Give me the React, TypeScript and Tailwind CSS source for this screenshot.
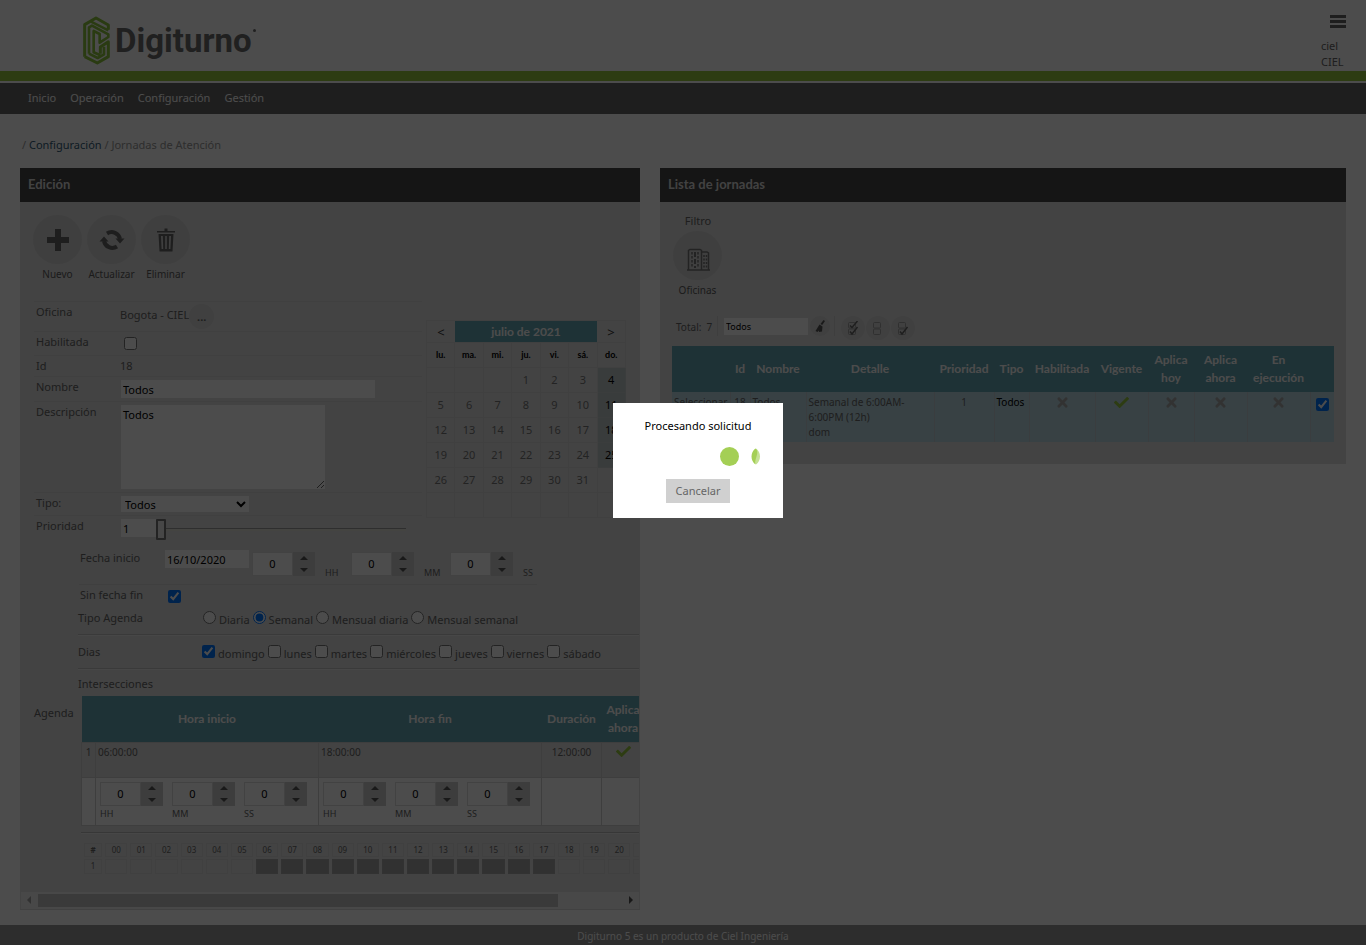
import React from "react";
import { FaCheck, FaTimes } from "react-icons/fa";

const inputBase = "border-0 bg-white text-black outline-none";

function Logo() {
  return (
    <div className="flex items-center gap-[5px]">
      <svg width="27" height="49" viewBox="0 0 81 147" fill="none" stroke="#8cc63f" strokeWidth="9" strokeLinejoin="round">
        <path d="M5 122V26L39 6l37 21v14" />
        <path d="M5 122l38 19 33-19V77L52 93v20" />
        <path d="M18 113V34l9-5 49 26v8L50 80V54L32 45v64l20 9" strokeWidth="8" />
        <path d="M18 113l26 13 19-11V92" strokeWidth="8" />
        <path d="M24 17 76 43" strokeWidth="7" />
      </svg>
      <div className="relative font-['Roboto',sans-serif] text-[33px] leading-[48px] font-bold text-[#6d6d6d]">
        Digiturno
        <span className="absolute top-3 -right-1 size-[3px] rounded-full bg-[#6d6d6d]" />
      </div>
    </div>
  );
}

function ToolButton({ label, children }: { label: string; children: React.ReactNode }) {
  return (
    <button type="button" className="flex w-[49px] flex-col items-center text-[10px] leading-4 text-[#5c5c5c]">
      <span className="flex size-[49px] items-center justify-center rounded-full bg-[#d3d3d3] text-[#666]">{children}</span>
      <span className="mt-[2px] whitespace-nowrap">{label}</span>
    </button>
  );
}

function PlusIcon() {
  return (
    <svg width="22" height="22" viewBox="0 0 22 22" fill="currentColor">
      <path d="M8 0h6v8h8v6h-8v8H8v-8H0V8h8z" />
    </svg>
  );
}

function RefreshIcon() {
  return (
    <svg width="26" height="24" viewBox="0 0 26 24" fill="none" stroke="currentColor" strokeWidth="4">
      <path d="M8 5.5A8.5 8.5 0 0 1 21 11" />
      <path d="M18 18.5A8.5 8.5 0 0 1 5 13" />
      <path d="M16.500 10.500h9L21 15.500zM.5 13.500h9L5 8.500z" fill="currentColor" stroke="none" />
    </svg>
  );
}

function TrashIcon() {
  return (
    <svg width="20" height="24" viewBox="0 0 20 24" fill="currentColor">
      <path d="M8.500.5h3V3H19v1.500H1V3h7.500z" />
      <path d="M2.500 6h15l-1 17.500h-13zM5 8l.6 13h1.600L6.800 8zm4.200 0v13h1.600V8zm4 0-.4 13h1.600L15 8z" fillRule="evenodd" />
    </svg>
  );
}

function BuildingIcon() {
  return (
    <svg width="24" height="23" viewBox="0 0 24 23" fill="none" stroke="#777">
      <path d="M1 22h23M2.500 22V2.500L4 1.500h10l1.500 1V22M15.500 4H21l1.500 1v17" strokeWidth="1.500" />
      <path d="M6 4v16M12 4v16" strokeWidth="1.500" strokeDasharray="2.500 1.500" />
      <path d="M9 4v16" strokeWidth="2" strokeDasharray="5 2" />
      <path d="M18 7v13M20.500 7v13" strokeWidth="1.500" strokeDasharray="2 1.500" />
    </svg>
  );
}

function BrushIcon() {
  return (
    <svg width="10" height="12" viewBox="0 0 10 12" fill="#555">
      <path d="M8.500 0 10 1 7.200 5 5.500 4z" />
      <path d="M4.500 4.500 7.500 6.500 7 11.500 4 12l-.3-1.500L2.500 12 .5 11z" />
    </svg>
  );
}

function ChecksIcon({ top, bottom }: { top?: boolean; bottom?: boolean }) {
  return (
    <svg width="12" height="15" viewBox="0 0 12 15" fill="none" stroke="#a0a0a0">
      <rect x="1.500" y="1.500" width="7" height="5.500" rx="1" />
      <rect x="1.500" y="8" width="7" height="5.500" rx="1" />
      {top && <path d="M3 4.500 5 6.500 10.500 0" stroke="#666" strokeWidth="1.500" />}
      {bottom && <path d="M3 10.500 5 13 10.500 6" stroke="#666" strokeWidth="1.500" />}
    </svg>
  );
}

function Triangle({ up }: { up?: boolean }) {
  return (
    <svg width="8" height="4" viewBox="0 0 8 4" fill="#555">
      {up ? <path d="M4 0 8 4H0z" /> : <path d="M0 0h8L4 4z" />}
    </svg>
  );
}

function Spinner({ label }: { label: string }) {
  return (
    <div className="flex h-6 w-[63px] shrink-0">
      <input aria-label={label} defaultValue="0" className="w-[41px] border border-[#dedede] bg-white text-center text-[11px] text-black" />
      <div className="flex w-[22px] flex-col bg-[#cdcdcd]">
        <button type="button" aria-label={label + ": aumentar"} className="flex h-3 items-center justify-center"><Triangle up /></button>
        <button type="button" aria-label={label + ": disminuir"} className="flex h-3 items-center justify-center"><Triangle /></button>
      </div>
    </div>
  );
}

function FormRow({ label, htmlFor, height, children }: { label: string; htmlFor?: string; height: string; children: React.ReactNode }) {
  return (
    <div className={"flex border-t border-[#d6d6d6] " + height}>
      <label htmlFor={htmlFor} className="w-[86px] shrink-0 pt-[2px] pl-[2px]">{label}</label>
      {children}
    </div>
  );
}

const weeks = [
  ["", "", "", "1", "2", "3", "4"],
  ["5", "6", "7", "8", "9", "10", "11"],
  ["12", "13", "14", "15", "16", "17", "18"],
  ["19", "20", "21", "22", "23", "24", "25"],
  ["26", "27", "28", "29", "30", "31", ""],
  ["", "", "", "", "", "", ""],
];

function Calendar() {
  return (
    <table className="mt-[19px] h-[197px] w-[200px] shrink-0 table-fixed border-collapse text-center text-[#777]">
      <thead>
        <tr className="h-[22px] border border-[#d6d6d6] text-[#333]">
          <th className="text-[13px] font-normal"><button type="button">&lt;</button></th>
          <th colSpan={5} className="bg-[#67a7b4] font-['Lato',sans-serif] text-[12px] leading-4 font-bold text-white">julio de 2021</th>
          <th className="text-[13px] font-normal"><button type="button">&gt;</button></th>
        </tr>
        <tr className="h-[25px] font-['Lato',sans-serif] text-[9px] text-black">
          {["lu.", "ma.", "mi.", "ju.", "vi.", "sá.", "do."].map((d) => (
            <th key={d} className="border border-[#d6d6d6] p-0 font-bold">{d}</th>
          ))}
        </tr>
      </thead>
      <tbody>
        {weeks.map((w, i) => (
          <tr key={i} className="h-[25px]">
            {w.map((d, j) => (
              <td key={j} className={j === 6 && d ? "border border-[#c6cccc] bg-[#c0c8c8] p-0 text-black" : "border border-[#d6d6d6] p-0"}>{d}</td>
            ))}
          </tr>
        ))}
      </tbody>
    </table>
  );
}

function Rule() {
  return <div className="ml-[57px] h-[2px] border-t border-b border-t-[#c4c4c4] border-b-[#eee]" />;
}

const days = ["domingo", "lunes", "martes", "miércoles", "jueves", "viernes", "sábado"];
const kinds = ["Diaria", "Semanal", "Mensual diaria", "Mensual semanal"];
const hours = Array.from({ length: 24 }, (_, i) => String(i).padStart(2, "0"));

function TimeCell({ name }: { name: string }) {
  return (
    <td className="border border-[#d0d0d0] p-0 pt-1 pl-1 align-top">
      <div className="flex gap-[9px]">
        {["HH", "MM", "SS"].map((u) => (
          <div key={u}>
            <Spinner label={name + " " + u} />
            <div className="text-[9px] leading-4">{u}</div>
          </div>
        ))}
      </div>
    </td>
  );
}

function EditPanel() {
  return (
    <section className="min-w-0 bg-[#e0e0e0]">
      <h2 className="h-[34px] bg-[#464646] pl-2 font-['Lato',sans-serif] text-[13px] leading-[33px] font-bold text-[#ddd]">Edición</h2>
      <div className="overflow-hidden border-x border-[#e0e0e0]">
        <div className="w-[700px] pb-4">
          <div className="flex gap-[5px] pt-[13px] pl-3">
            <ToolButton label="Nuevo"><PlusIcon /></ToolButton>
            <ToolButton label="Actualizar"><RefreshIcon /></ToolButton>
            <ToolButton label="Eliminar"><TrashIcon /></ToolButton>
          </div>

          <div className="mt-[19px] flex items-start gap-1 pl-[13px]">
            <div className="w-[388px]">
              <FormRow label="Oficina" height="h-[30px]">
                <span className="pt-[5px]">Bogota - CIEL</span>
                <button type="button" aria-label="Elegir oficina" className="mt-[2px] size-[25px] rounded-full bg-[#d6d6d6] font-bold">...</button>
              </FormRow>
              <FormRow label="Habilitada" htmlFor="enabled" height="h-[24px]">
                <input id="enabled" type="checkbox" className="mt-[5px] ml-1 size-[13px]" />
              </FormRow>
              <FormRow label="Id" height="h-[21px]"><span className="pt-[2px]">18</span></FormRow>
              <FormRow label="Nombre" htmlFor="name" height="h-[25px]">
                <input id="name" defaultValue="Todos" className={inputBase + " mt-[3px] ml-px h-[18px] w-[254px] pl-[2px]"} />
              </FormRow>
              <FormRow label="Descripción" htmlFor="desc" height="h-[91px]">
                <textarea id="desc" defaultValue="Todos" className={inputBase + " mt-[3px] ml-px h-[84px] w-[204px] pt-[2px] pl-[2px]"} />
              </FormRow>
              <FormRow label="Tipo:" htmlFor="kind" height="h-[23px]">
                <select id="kind" className={inputBase + " mt-[3px] ml-px h-4 w-[128px]"}><option>Todos</option></select>
              </FormRow>
              <FormRow label="Prioridad" htmlFor="priority" height="h-[32px]">
                <input id="priority" defaultValue="1" className={inputBase + " mt-[3px] ml-px h-[18px] w-[35px] pl-[2px]"} />
                <input
                  type="range" aria-label="Prioridad" min={1} max={100} defaultValue={1}
                  className="mt-[2px] h-[22px] w-[250px] appearance-none bg-transparent [&::-webkit-slider-runnable-track]:h-[3px] [&::-webkit-slider-runnable-track]:border-t [&::-webkit-slider-runnable-track]:border-[#999] [&::-webkit-slider-runnable-track]:bg-[#e4e4da] [&::-webkit-slider-thumb]:-mt-[10px] [&::-webkit-slider-thumb]:h-[21px] [&::-webkit-slider-thumb]:w-[10px] [&::-webkit-slider-thumb]:appearance-none [&::-webkit-slider-thumb]:rounded-[1px] [&::-webkit-slider-thumb]:border-2 [&::-webkit-slider-thumb]:border-[#777] [&::-webkit-slider-thumb]:bg-[#eee]"
                />
              </FormRow>
            </div>
            <Calendar />
          </div>

          <div className="ml-[58px] flex h-[38px] w-[458px] items-start border-b border-[#d4d4d4]">
            <label htmlFor="start" className="w-[86px] shrink-0 pt-[3px] pl-px">Fecha inicio</label>
            <input id="start" defaultValue="16/10/2020" className={inputBase + " mt-[3px] mr-[3px] h-[18px] w-[84px] shrink-0 pl-[2px]"} />
            {["HH", "MM", "SS"].map((u) => (
              <div key={u} className="mt-[5px] flex w-[99px] shrink-0 items-end gap-[10px]">
                <Spinner label={"Fecha inicio " + u} />
                <span className="text-[9px] leading-[6px]">{u}</span>
              </div>
            ))}
          </div>
          <div className="flex h-[21px] pl-[59px]">
            <label htmlFor="noend" className="w-[88px] pt-[2px]">Sin fecha fin</label>
            <input id="noend" type="checkbox" defaultChecked className="mt-[5px] size-[13px]" />
          </div>
          <div className="flex h-7 pl-[57px]">
            <span className="w-[125px] pt-1">Tipo Agenda</span>
            <div className="flex gap-[3px] pt-[5px]">
              {kinds.map((k) => (
                <label key={k} className="flex gap-[3px]">
                  <input type="radio" name="schedule" defaultChecked={k === "Semanal"} className="size-[13px]" />
                  <span className="pt-px">{k}</span>
                </label>
              ))}
            </div>
          </div>
          <Rule />
          <div className="flex h-8 pl-[57px]">
            <span className="w-[124px] pt-2">Dias</span>
            <div className="flex gap-[3px] pt-[9px]">
              {days.map((d) => (
                <label key={d} className="flex gap-[3px]">
                  <input type="checkbox" defaultChecked={d === "domingo"} className="size-[13px]" />
                  <span className="pt-px">{d}</span>
                </label>
              ))}
            </div>
          </div>
          <Rule />
          <div className="h-[26px] pt-[6px] pl-[57px]">Intersecciones</div>

          <div className="flex">
            <div className="w-[60px] shrink-0 pt-[9px] pl-[13px]">Agenda</div>
            <div className="w-[640px]">
              <table className="w-full table-fixed border-collapse text-[10px]">
                <colgroup>
                  <col className="w-[14px]" /><col className="w-[223px]" /><col className="w-[223px]" />
                  <col className="w-[60px]" /><col className="w-[43px]" /><col />
                </colgroup>
                <thead>
                  <tr className="h-[46px] bg-[#67a7b4] font-['Lato',sans-serif] text-[12px] leading-[18px] text-white">
                    <th></th><th>Hora inicio</th><th>Hora fin</th><th>Duración</th><th>Aplica ahora</th><th></th>
                  </tr>
                </thead>
                <tbody>
                  <tr className="h-[35px] align-top leading-4">
                    <td className="border border-[#d0d0d0] p-0 pt-px text-center">1</td>
                    <td className="border border-[#d0d0d0] p-0 pt-px pl-[2px]">06:00:00</td>
                    <td className="border border-[#d0d0d0] p-0 pt-px pl-[2px]">18:00:00</td>
                    <td className="border border-[#d0d0d0] p-0 pt-px text-center">12:00:00</td>
                    <td className="border border-[#d0d0d0] p-0 pt-px"><FaCheck size={15} color="#96c83c" className="mx-auto" /></td>
                    <td className="border border-[#d0d0d0] p-0"></td>
                  </tr>
                  <tr className="h-[48px] bg-white">
                    <td className="border border-[#d0d0d0] p-0"></td>
                    <TimeCell name="Hora inicio" />
                    <TimeCell name="Hora fin" />
                    <td className="border border-[#d0d0d0] p-0"></td>
                    <td className="border border-[#d0d0d0] p-0"></td>
                    <td className="border border-[#d0d0d0] p-0"></td>
                  </tr>
                </tbody>
              </table>
              <div className="mt-[6px] h-[2px] border-t border-b border-t-[#b8b8b8] border-b-[#eee]" />
              <table className="mt-[7px] w-[628px] table-fixed border-separate border-spacing-x-[3px] border-spacing-y-[2px] text-center text-[8px]">
                <colgroup>
                  <col className="w-[18px]" />
                  {hours.map((h) => <col key={h} className="w-[22px]" />)}
                </colgroup>
                <thead>
                  <tr className="h-[14px]">
                    <th className="border border-[#d6d6d6] p-0 leading-3">#</th>
                    {hours.map((h) => <th key={h} className="border border-[#d6d6d6] p-0 leading-3 font-normal">{h}</th>)}
                  </tr>
                </thead>
                <tbody>
                  <tr className="h-[15px]">
                    <td className="border border-[#d6d6d6] p-0 leading-3">1</td>
                    {hours.map((h, i) => (
                      <td key={h} className={i >= 6 && i < 18 ? "border border-[#a8a8a8] bg-[#a3a3a3] p-0" : "border border-[#d6d6d6] p-0"}></td>
                    ))}
                  </tr>
                </tbody>
              </table>
            </div>
          </div>
        </div>
        <div className="flex h-[17px] items-center bg-[#f1f1f1]">
          <svg width="17" height="8" viewBox="0 0 17 8"><path d="M10 0v8L6 4z" fill="#a3a3a3" /></svg>
          <div className="flex-1"><div className="h-[13px] w-[89%] bg-[#c1c1c1]" /></div>
          <svg width="17" height="8" viewBox="0 0 17 8"><path d="M7 0v8l4-4z" fill="#505050" /></svg>
        </div>
      </div>
      <div className="h-px bg-[#d9d9d9]" />
    </section>
  );
}

const cell = "border-r border-[#c2cdd2] p-0 px-[2px] pt-[3px]";

function ListPanel() {
  return (
    <section className="min-w-0 bg-[#e0e0e0] pb-[22px]">
      <h2 className="h-[34px] bg-[#464646] pl-2 font-['Lato',sans-serif] text-[13px] leading-[33px] font-bold text-[#ddd]">Lista de jornadas</h2>
      <div className="px-3 pt-[11px]">
        <div className="ml-px w-[50px] text-center leading-4">Filtro</div>
        <div className="ml-px pt-[2px]"><ToolButton label="Oficinas"><span className="pt-2"><BuildingIcon /></span></ToolButton></div>
        <div className="mt-[18px] flex h-[30px] items-start pl-1 text-[10px]">
          <span className="w-[41px] pt-[3px] whitespace-nowrap">Total:&nbsp; 7</span>
          <div className="h-5 border-l border-[#cfcfcf]" />
          <input aria-label="Filtrar jornadas" defaultValue="Todos" className={inputBase + " mt-[2px] ml-[6px] h-[17px] w-[84px] pl-[2px] text-[9px]"} />
          <button type="button" aria-label="Limpiar filtro" className="ml-[2px] flex size-[20px] items-center justify-center rounded-full bg-[#d6d6d6]"><BrushIcon /></button>
          <div className="ml-1 h-5 border-l border-[#cfcfcf]" />
          <div className="ml-[6px] flex gap-px">
            <button type="button" aria-label="Marcar todas" className="flex size-6 items-center justify-center rounded-full bg-[#d6d6d6]"><ChecksIcon top bottom /></button>
            <button type="button" aria-label="Desmarcar todas" className="flex size-6 items-center justify-center rounded-full bg-[#d6d6d6]"><ChecksIcon /></button>
            <button type="button" aria-label="Invertir selección" className="flex size-6 items-center justify-center rounded-full bg-[#d6d6d6]"><ChecksIcon bottom /></button>
          </div>
        </div>
        <table className="w-full table-fixed border-collapse text-[10px]">
          <colgroup>
            <col className="w-[58px]" /><col className="w-[20px]" /><col className="w-[56px]" /><col className="w-[128px]" />
            <col className="w-[60px]" /><col className="w-[35px]" /><col className="w-[66px]" /><col className="w-[53px]" />
            <col className="w-[46px]" /><col className="w-[53px]" /><col className="w-[63px]" /><col className="w-[24px]" />
          </colgroup>
          <thead>
            <tr className="h-[46px] bg-[#67a7b4] font-['Lato',sans-serif] text-[12px] leading-[18px] text-white">
              <th className="p-0"></th><th className="p-0">Id</th><th className="p-0">Nombre</th><th className="p-0">Detalle</th>
              <th className="p-0">Prioridad</th><th className="p-0">Tipo</th><th className="p-0">Habilitada</th><th className="p-0">Vigente</th>
              <th className="p-0">Aplica hoy</th><th className="p-0">Aplica ahora</th><th className="p-0">En ejecución</th><th className="p-0"></th>
            </tr>
          </thead>
          <tbody>
            <tr className="h-[50px] bg-[#bbd9e3] align-top leading-[15px]">
              <td className={cell}><a href="#seleccionar">Seleccionar</a></td>
              <td className={cell + " text-center"}>18</td>
              <td className={cell}>Todos</td>
              <td className={cell}>Semanal de 6:00AM-<br />6:00PM (12h)<br />dom</td>
              <td className={cell + " text-center"}>1</td>
              <td className={cell + " text-black"}>Todos</td>
              <td className={cell}><FaTimes size={15} color="#a8a8a8" className="mx-auto" /></td>
              <td className={cell}><FaCheck size={15} color="#96c83c" className="mx-auto" /></td>
              <td className={cell}><FaTimes size={15} color="#a8a8a8" className="mx-auto" /></td>
              <td className={cell}><FaTimes size={15} color="#a8a8a8" className="mx-auto" /></td>
              <td className={cell}><FaTimes size={15} color="#a8a8a8" className="mx-auto" /></td>
              <td className="p-0 pt-[6px]"><input type="checkbox" aria-label="Seleccionar jornada 18" defaultChecked className="mx-auto block size-[13px]" /></td>
            </tr>
          </tbody>
        </table>
      </div>
    </section>
  );
}

function BusyDialog() {
  return (
    <div className="fixed inset-0 flex items-center justify-center bg-black/70 pb-6 pl-[30px]">
      <div role="dialog" aria-label="Procesando solicitud" className="flex h-[115px] w-[170px] flex-col items-center bg-white pt-[15px] leading-4 text-black">
        <p>Procesando solicitud</p>
        <svg className="mt-3 ml-[84px]" width="42" height="20" viewBox="0 0 42 20">
          <circle cx="10.500" cy="10.500" r="9.500" fill="#a4cf55" />
          <path d="M37 2.500a10 10 0 0 1 0 16 10 10 0 0 1 0-16z" fill="#c5e193" />
          <path d="M36.500 2.500q3 2 1 8t-1 8a10 10 0 0 1 0-16z" fill="#a4cf55" />
        </svg>
        <button type="button" className="mt-[13px] h-6 w-16 shrink-0 bg-[#d0d0d0] text-[#666]">Cancelar</button>
      </div>
    </div>
  );
}

export default function App() {
  return (
    <div className="flex min-h-screen flex-col bg-white font-['Noto_Sans',sans-serif] text-[11px] leading-4 text-[#666]">
      <header className="flex h-[71px] items-start justify-between pr-5 pl-[83px]">
        <div className="pt-4"><Logo /></div>
        <div className="flex w-[25px] flex-col pt-[15px]">
          <button type="button" aria-label="Menú" className="ml-[9px] flex w-4 flex-col gap-[2px]">
            <span className="h-[3px] w-4 bg-[#666]" /><span className="h-[3px] w-4 bg-[#666]" /><span className="h-[3px] w-4 bg-[#666]" />
          </button>
          <span className="mt-[10px]">ciel</span>
          <span>CIEL</span>
        </div>
      </header>
      <div className="h-[10px] bg-[#96c83c]" />
      <nav className="mt-[2px] flex h-[31px] gap-[14px] bg-[#676767] pl-7 leading-[30px] text-white">
        <a href="#inicio">Inicio</a><a href="#operacion">Operación</a><a href="#configuracion">Configuración</a><a href="#gestion">Gestión</a>
      </nav>
      <div className="h-[54px] pt-[23px] pl-[22px] text-[#999]">
        / <a href="#configuracion" className="text-[#335c78]">Configuración</a> / Jornadas de Atención
      </div>
      <main className="grid flex-1 grid-cols-[620fr_686fr] items-start gap-5 px-5 pb-[15px]">
        <EditPanel />
        <ListPanel />
      </main>
      <footer className="h-5 bg-[#969696] text-center text-[10px] leading-[22px] text-white">Digiturno 5 es un producto de Ciel Ingeniería</footer>
      <BusyDialog />
    </div>
  );
}
